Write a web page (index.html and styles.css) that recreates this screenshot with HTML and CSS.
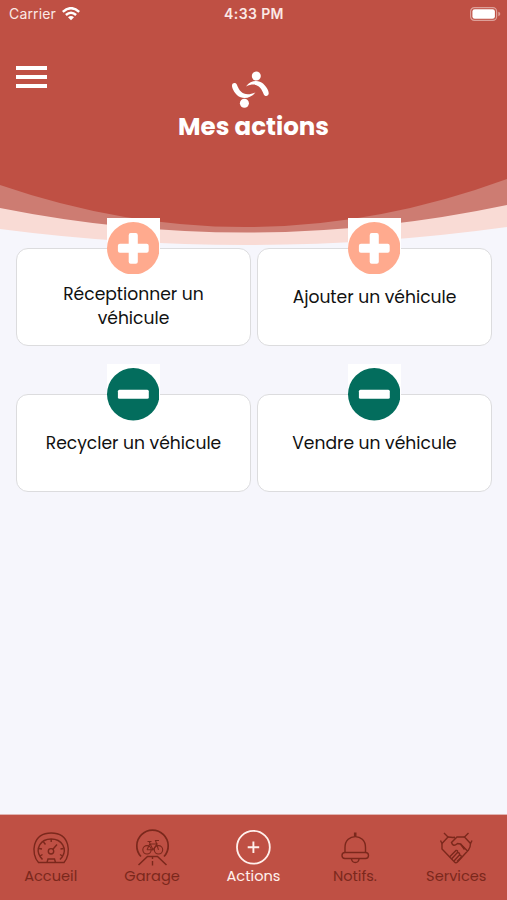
FILE: index.html
```html
<!DOCTYPE html>
<html lang="fr">
<head>
    <meta charset="UTF-8">
    <meta name="viewport" content="width=device-width, initial-scale=1.0">
    <title>Mes actions</title>
    <link rel="stylesheet" href="styles.css">
</head>
<body>
    <div class="screen">
        <header class="header">
            <svg class="waves" viewBox="0 0 507 250" preserveAspectRatio="none">
                <path fill="#f9dbd5" d="M0 0H507V227Q253.500 262 0 229Z"/>
                <path fill="#cd7c72" d="M0 0H507V205Q253.500 258.500 0 208Z"/>
                <path fill="#bf5044" d="M0 0H507V179Q253.500 272 0 185Z"/>
            </svg>
            <div class="status-bar">
                <div class="carrier">
                    <span>Carrier</span>
                    <svg width="18" height="14" viewBox="0 0 18 14" fill="none" stroke="#fff" stroke-width="2.500">
                        <path d="M.8 4.900Q9-2.500 17.200 4.900"/>
                        <path d="M3.900 8Q9 3.500 14.100 8"/>
                        <path d="M6 10.200Q9 7.700 12 10.200L9 13.300Z" fill="#fff" stroke="none"/>
                    </svg>
                </div>
                <span class="time">4:33 PM</span>
                <svg class="battery" width="31" height="14" viewBox="0 0 31 14">
                    <rect x=".6" y=".6" width="26" height="12.800" rx="3.800" fill="none" stroke="#dda099" stroke-width="1.200"/>
                    <rect x="2.400" y="2.300" width="22.500" height="9.400" rx="2.300" fill="#fff"/>
                    <path d="M28.300 4.800Q30.300 5.400 30.300 7T28.300 9.200Z" fill="#dda099"/>
                </svg>
            </div>
            <button class="menu-btn" aria-label="Menu"><span></span><span></span><span></span></button>
            <div class="brand">
                <svg width="38" height="38" viewBox="0 0 38 38" fill="#fff">
                    <circle cx="25.300" cy="5" r="4.500"/>
                    <circle cx="13.400" cy="32.200" r="4.500"/>
                    <path d="M1 14.500C1.200 11.600 5 11.200 6 14C8.500 20.800 13.500 26.200 24.400 21.500C19.500 27.800 11 28.600 6.200 24.200C3 21 .8 17 1 14.500Z"/>
                    <path d="M37.700 22.500C37.500 25.600 33.600 25.900 32.600 23C30.200 16 25.500 10.600 15 15.500C19.500 9 27.500 8.500 32 12.500C35.500 15.800 37.900 20 37.700 22.500Z"/>
                </svg>
                <h1>Mes actions</h1>
            </div>
        </header>

        <main class="actions">
            <button class="card">
                <span class="badge"><svg viewBox="0 0 52 52"><circle cx="26" cy="26" r="26" fill="#ffaa8e"/><path fill="#fff" d="M23.500 11H28.500Q30.500 11 30.500 13V21.500H39.300Q41.300 21.500 41.300 23.500V28.500Q41.300 30.500 39.300 30.500H30.500V39.300Q30.500 41.300 28.500 41.300H23.500Q21.500 41.300 21.500 39.300V30.500H12.800Q10.800 30.500 10.800 28.500V23.500Q10.800 21.500 12.800 21.500H21.500V13Q21.500 11 23.500 11Z"/></svg></span>
                <span class="label two-lines">Réceptionner un<br>véhicule</span>
            </button>
            <button class="card">
                <span class="badge"><svg viewBox="0 0 52 52"><circle cx="26" cy="26" r="26" fill="#ffaa8e"/><path fill="#fff" d="M23.500 11H28.500Q30.500 11 30.500 13V21.500H39.300Q41.300 21.500 41.300 23.500V28.500Q41.300 30.500 39.300 30.500H30.500V39.300Q30.500 41.300 28.500 41.300H23.500Q21.500 41.300 21.500 39.300V30.500H12.800Q10.800 30.500 10.800 28.500V23.500Q10.800 21.500 12.800 21.500H21.500V13Q21.500 11 23.500 11Z"/></svg></span>
                <span class="label">Ajouter un véhicule</span>
            </button>
            <button class="card">
                <span class="badge"><svg viewBox="0 0 52 52"><circle cx="26" cy="26" r="26" fill="#036d5d"/><rect x="10.800" y="21.500" width="30.600" height="9" rx="1.500" fill="#fff"/></svg></span>
                <span class="label">Recycler un véhicule</span>
            </button>
            <button class="card">
                <span class="badge"><svg viewBox="0 0 52 52"><circle cx="26" cy="26" r="26" fill="#036d5d"/><rect x="10.800" y="21.500" width="30.600" height="9" rx="1.500" fill="#fff"/></svg></span>
                <span class="label">Vendre un véhicule</span>
            </button>
        </main>

        <nav class="tabs">
            <a class="tab">
                <svg viewBox="0 0 38 38">
                    <path d="M6.500 34.500C-1.500 26 0 5 19.200 5C38.500 5 39.500 26 32 34.500Z"/>
                    <path d="M10.500 31.500L8 28.500C3.500 21 8 11 19.200 11S35 21 30.500 28.500L28 31.500"/>
                    <path d="M19.200 11V14M11.500 14L13.500 16.500M7 20.500L10 21M31.500 20.500L28.500 21M8 28L10.500 26.500M30.500 28L28 26.500M15 34.500L16 31H22.500L23.500 34.500M20.700 21.500L25 16.500"/>
                    <circle cx="19" cy="23.300" r="2.700"/>
                </svg>
                <span>Accueil</span>
            </a>
            <a class="tab">
                <svg viewBox="0 0 38 38">
                    <path d="M8 28.500A15.700 15.700 0 1 1 31 28.500" stroke-width="1.700"/>
                    <path d="M5.500 37L14.500 28.500H24.500L33.500 37" stroke-width="1.500"/>
                    <path d="M19.500 29V31M19.500 33V37.500"/>
                    <g stroke-width="1.100">
                        <circle cx="14" cy="21.800" r="4.200"/>
                        <circle cx="25.500" cy="21.800" r="4.200"/>
                        <path d="M14 21.800L17 15.500L20 21.800L24 16H17M14 21.800H20M25.500 21.800L22.500 12.500H26M14.500 13.500H18.500M16.300 13.500L17 15.500"/>
                    </g>
                </svg>
                <span>Garage</span>
            </a>
            <a class="tab active">
                <svg viewBox="0 0 38 38">
                    <circle cx="19.400" cy="19.200" r="16.400" stroke-width="1.800"/>
                    <path d="M19.400 13.500V25M13.700 19.200H25.200" stroke-width="1.900"/>
                </svg>
                <span>Actions</span>
            </a>
            <a class="tab">
                <svg viewBox="0 0 38 38">
                    <path d="M9 24.500V19.500C9 5 29.500 5 29.500 19.500V24.500"/>
                    <rect x="6" y="24.500" width="26.500" height="6" rx="3"/>
                    <path d="M15.500 31Q16 34.500 19.300 34.500T23 31"/>
                    <path d="M19.200 4.500V8.500" stroke-width="2.600"/>
                </svg>
                <span>Notifs.</span>
            </a>
            <a class="tab">
                <svg viewBox="0 0 38 38">
                    <path d="M7 5L11 9L5 15.500L3.500 12.500M31.500 5L27.500 9L33.500 15.500L35 12.500"/>
                    <path d="M11 9Q15.500 9.700 18 9.300M5 15.500V21L17.500 34Q18.800 35.500 20.500 34L31.500 22Q33.500 19.500 33.500 15.500M27.500 9H20L14.500 14.500Q16 19.500 20.500 15.500L23.500 16L30.500 23"/>
                    <path d="M12.500 29L19 22.500Q21 22 20.500 24.500L14.500 31M20.500 24.500Q23 24.500 22.500 27L17 33M22.500 27Q25 27.500 24 29.500L20 33.500M23.500 16L27.500 21.500"/>
                </svg>
                <span>Services</span>
            </a>
        </nav>
    </div>
</body>
</html>
```

FILE: styles.css
```css
* {
    box-sizing: border-box;
}
body {
    margin: 0;
    font-family: Poppins, Inter, "Liberation Sans", sans-serif;
    background-color: #f6f6fc;
}
button {
    font-family: inherit;
    border: none;
    background: none;
    padding: 0;
}
.screen {
    height: 900px;
    display: flex;
    flex-direction: column;
}
.header {
    position: relative;
    height: 247.5px;
    color: #fff;
}
/* curved backdrop, runs behind the header content */
.waves {
    position: absolute;
    top: 0;
    left: 0;
    width: 100%;
    height: 250px;
    z-index: -1;
}
.status-bar {
    display: grid;
    grid-template-columns: 1fr auto 1fr;
    align-items: center;
    height: 27px;
    padding: 0 6px 0 9px;
    font-family: Inter, sans-serif;
    font-size: 14px;
    color: #fbe9e6;
}
.carrier {
    display: flex;
    align-items: center;
    gap: 6px;
}
.carrier span {
    letter-spacing: 0.15px;
}
.time {
    font-weight: 600;
    letter-spacing: 0.4px;
    margin-right: 2px;
}
.battery {
    justify-self: end;
}
.menu-btn {
    display: flex;
    flex-direction: column;
    gap: 5px;
    width: 31px;
    margin: 39px 0 0 16px;
}
.menu-btn span {
    height: 4px;
    background-color: #fff;
}
.brand {
    display: flex;
    flex-direction: column;
    align-items: center;
    margin-top: -17px;
}
.brand svg {
    margin-right: 7px;
}
h1 {
    margin: 3px 0 0;
    font-size: 24.5px;
    line-height: 30px;
    font-weight: 700;
}
.actions {
    flex: 1;
    display: grid;
    grid-template-columns: 1fr 1fr;
    grid-auto-rows: 98px;
    column-gap: 6px;
    row-gap: 48.5px;
    padding: 0 15px 0 16px;
}
.card {
    position: relative;
    padding-top: 36px;
    background-color: #fff;
    border: 1.5px solid #dcdcde;
    border-radius: 12px;
    display: flex;
    justify-content: center;
    align-items: flex-start;
    color: #111;
}
.badge {
    position: absolute;
    top: -31px;
    left: 50%;
    width: 53px;
    height: 57px;
    margin-left: -27px;
    padding-top: 4px;
    background-color: #fff;
}
.badge svg {
    display: block;
    width: 52.5px;
    height: 52.5px;
}
.label {
    font-size: 17.15px;
    line-height: 24px;
}
.two-lines {
    margin-top: -3px;
}
.tabs {
    display: grid;
    grid-template-columns: repeat(5, 1fr);
    height: 86px;
    padding-top: 13px;
    background-color: #bf5044;
    border-top: 1px solid #e0b4b2;
}
.tab {
    display: flex;
    flex-direction: column;
    align-items: center;
    font-size: 14.6px;
    line-height: 20px;
    color: #7b281c;
}
.tab svg {
    width: 38px;
    height: 38px;
    fill: none;
    stroke: currentColor;
    stroke-width: 1.4;
}
.active {
    color: #fff0ec;
}
```
